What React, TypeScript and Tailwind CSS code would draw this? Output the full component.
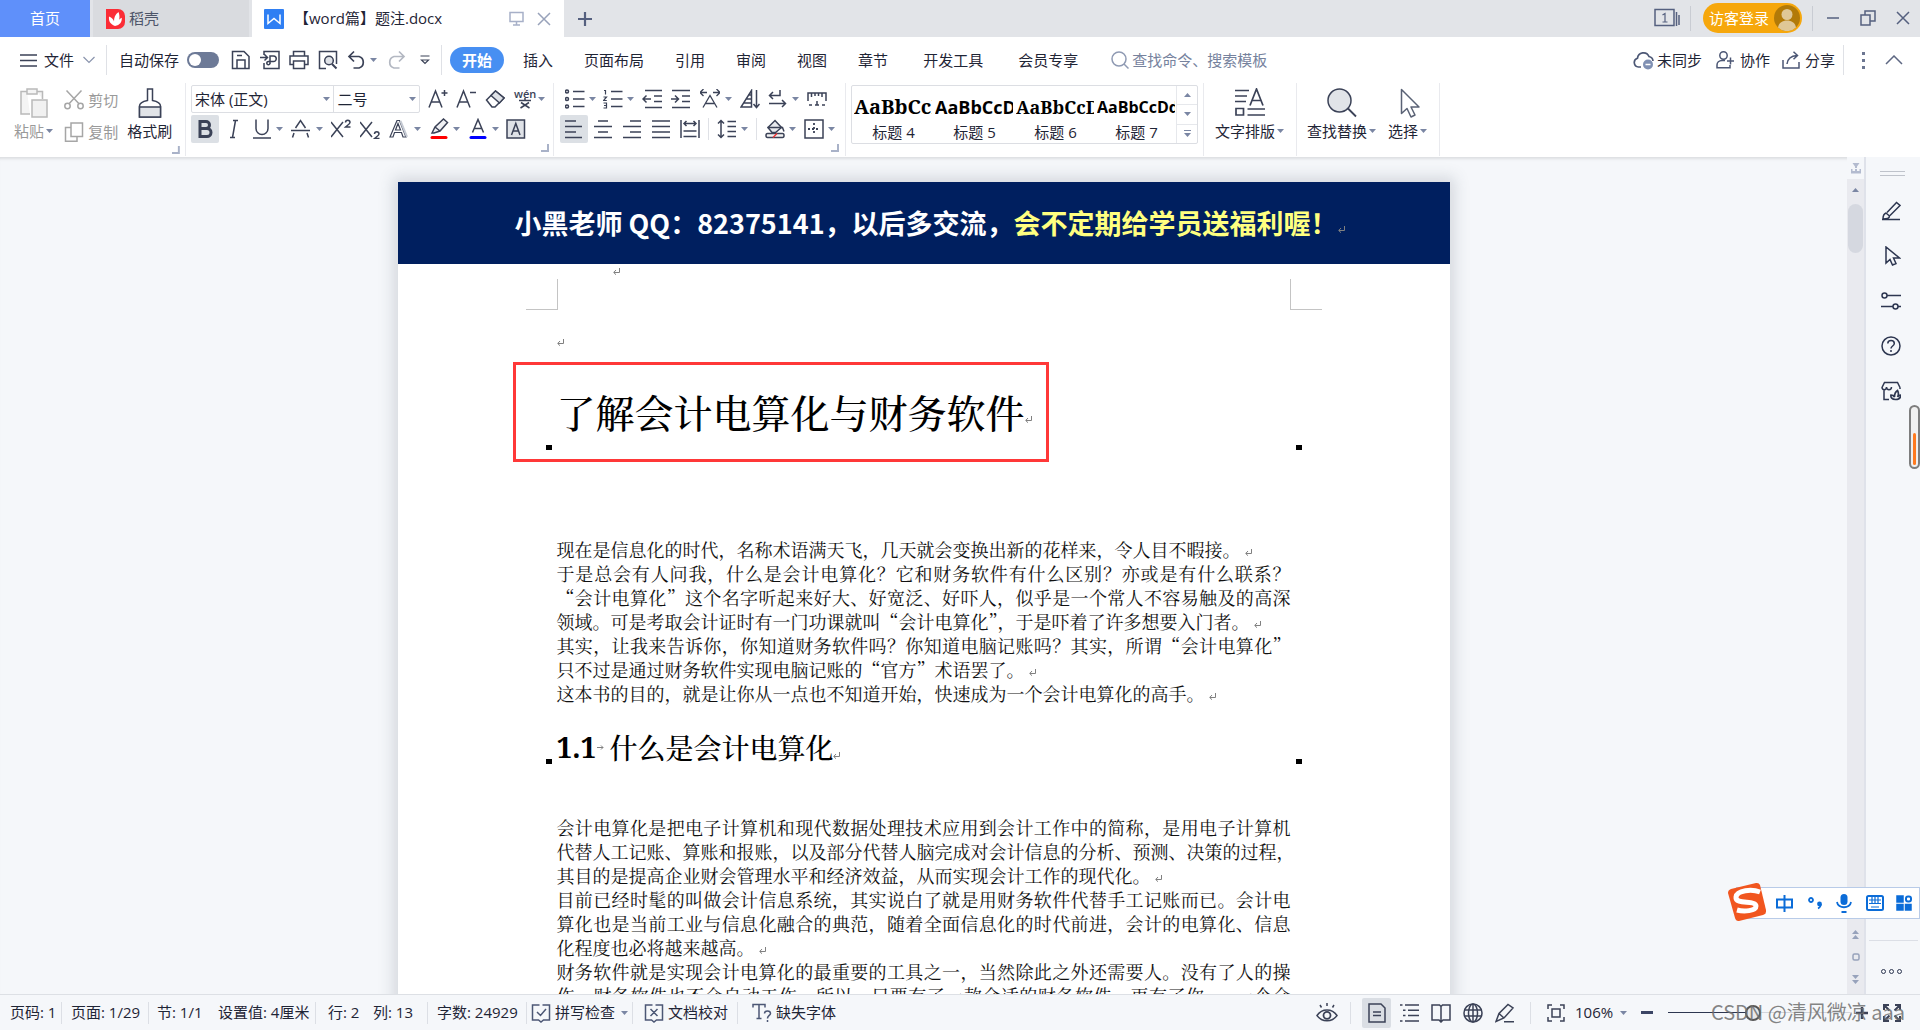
import React from 'react';

type P = { c?: string; children?: React.ReactNode };

/* ---------- shared pieces ---------- */

const Ico = ({ c = 'h-5 w-5', vb = '0 0 20 20', children }: P & { vb?: string }) => (
  <svg viewBox={vb} className={`shrink-0 ${c}`} fill="none" stroke="currentColor" strokeWidth="1.5" aria-hidden="true">
    {children}
  </svg>
);

const Caret = ({ c = '' }: P) => (
  <svg viewBox="0 0 7 4" className={`h-1 w-[7px] shrink-0 ${c}`} fill="#7a86a3" aria-hidden="true">
    <path d="M0 0h7L3.500 4z" />
  </svg>
);

const Tool = ({ label, c = '', children, caret }: P & { label: string; caret?: boolean }) => (
  <button type="button" aria-label={label} title={label} className={`flex h-7 shrink-0 items-center ${c}`}>
    {children}
    {caret && <Caret c="ml-auto" />}
  </button>
);

const Corner = ({ c = '' }: P) => (
  <svg viewBox="0 0 8 8" className={`h-2 w-2 ${c}`} fill="none" stroke="#a9b2c8" strokeWidth="2" aria-hidden="true">
    <path d="M7 0v7H0" />
  </svg>
);

const Mark = ({ c = 'inline-block' }: P) => (
  <svg viewBox="0 0 7 7" className={`h-[7px] w-[7px] shrink-0 ${c}`} fill="none" stroke="#808080" strokeWidth="1" aria-hidden="true">
    <path d="M6.500 0v4.500H1M3 2L.7 4.500L3 6.700" />
  </svg>
);

/* ---------- title bar ---------- */

function TitleBar() {
  return (
    <header className="flex h-[37px] items-stretch bg-[#e2e4e8]">
      <button type="button" className="w-[90px] bg-[#5f90fa] pb-px text-[15px] text-white">首页</button>
      <button type="button" className="ml-[3px] flex w-[156px] items-center bg-[#d9dbdf] pl-[13px] text-[15px] text-[#4d5569]">
        <svg viewBox="0 0 19 20" className="mr-1 h-5 w-[19px]" aria-hidden="true">
          <path d="M0 0h12a7 7 0 0 1 7 7v6a7 7 0 0 1-7 7H0z" fill="#fb2c36" />
          <path d="M9 17C4 15 2.500 12 3 7.500c3 1.200 4.500 3 5 5C8 8.500 9 5.500 12.500 3c1.800 5 1 8.500-1.300 11 .8-2.300 2-4.300 4.600-5.300C16 13 14 16 9 17z" fill="#fff" />
        </svg>
        稻壳
      </button>
      <div className="ml-[3px] flex w-[312px] items-center bg-white pl-3 text-[#1f2536]">
        <svg viewBox="0 0 20 20" className="h-5 w-5" aria-hidden="true">
          <rect width="20" height="20" rx="1" fill="#2f7ff3" />
          <path d="M4 5.500v9l6-5 6 5v-9" fill="none" stroke="#fff" strokeWidth="1.500" />
        </svg>
        <span className="ml-2.5 text-[15px] whitespace-nowrap">【word篇】题注.docx</span>
        <Ico c="mr-[13px] ml-auto h-[15px] w-[15px] text-[#a7b0c8]" vb="0 0 15 15">
          <path d="M1 1.500h13v9H1zM7.500 10.500V14M4 14h7" />
        </Ico>
        <button type="button" aria-label="关闭标签" className="mr-[13px] text-[#98a2ba]">
          <Ico c="h-3.5 w-3.5" vb="0 0 14 14"><path d="M1 1l12 12M13 1L1 13" /></Ico>
        </button>
      </div>
      <button type="button" aria-label="新建标签" className="ml-3.5 text-[#55607f]">
        <Ico c="h-3.5 w-3.5" vb="0 0 14 14"><path d="M7 0v14M0 7h14" strokeWidth="2.200" /></Ico>
      </button>
      <div className="ml-auto flex items-center pb-px text-[#55607f]">
        <button type="button" aria-label="窗口列表">
          <Ico c="h-5 w-[26px]" vb="0 0 26 20">
            <path d="M1 1.500h19v16H1zM22.500 4v14M25 7v10" />
            <path d="M8.500 7L11 5.500V14M8.500 14h5" strokeWidth="1.200" />
          </Ico>
        </button>
        <span className="ml-2.5 h-[25px] w-px bg-[#c9ccd3]" />
        <button type="button" className="ml-3 flex h-[30px] w-[99px] items-center justify-between rounded-[15px] bg-[#f6a70c] pr-0.5 pl-1.5 text-[15px] text-white">
          访客登录
          <svg viewBox="0 0 26 26" className="h-[26px] w-[26px]" aria-hidden="true">
            <circle cx="13" cy="13" r="13" fill="#b27a08" />
            <circle cx="13" cy="9.500" r="5.500" fill="#dfc797" />
            <path d="M4 22.500c1-5 4.500-7 9-7s8 2 9 7A13 13 0 0 1 4 22.500z" fill="#dfc797" />
          </svg>
        </button>
        <span className="ml-2.5 h-[25px] w-px bg-[#c9ccd3]" />
        <button type="button" aria-label="最小化" className="ml-3.5">
          <Ico c="h-3 w-3" vb="0 0 12 12"><path d="M0 6h12" /></Ico>
        </button>
        <button type="button" aria-label="还原" className="ml-[21px]">
          <Ico c="h-4 w-4" vb="0 0 16 16"><path d="M1 5h9v10H1zM5 5V1h10v10h-5" /></Ico>
        </button>
        <button type="button" aria-label="关闭" className="mr-2.5 ml-5">
          <Ico c="h-3.5 w-3.5" vb="0 0 14 14"><path d="M1 1l12 12M13 1L1 13" /></Ico>
        </button>
      </div>
    </header>
  );
}

/* ---------- menu row ---------- */

const TABS: [string, string][] = [
  ['插入', 'ml-[19px]'],
  ['页面布局', 'ml-[31px]'],
  ['引用', 'ml-[31px]'],
  ['审阅', 'ml-[31px]'],
  ['视图', 'ml-[31px]'],
  ['章节', 'ml-[31px]'],
  ['开发工具', 'ml-[35px]'],
  ['会员专享', 'ml-[35px]'],
];

function MenuRow() {
  return (
    <nav className="flex h-[46px] items-center text-[15px] whitespace-nowrap text-[#1f2536]">
      <button type="button" className="ml-5 flex items-center">
        <Ico c="mr-[7px] h-[13px] w-[17px] text-[#3b4257]" vb="0 0 17 13"><path d="M0 1h17M0 6.500h17M0 12h17" /></Ico>
        文件
        <Ico c="ml-[9px] h-2 w-3 text-[#8a94ad]" vb="0 0 12 8"><path d="M.5 1L6 6.500L11.500 1" strokeWidth="1.200" /></Ico>
      </button>
      <span className="ml-[11px] h-[30px] w-px bg-[#dfe1e6]" />
      <label className="ml-3 flex items-center">
        自动保存
        <input type="checkbox" role="switch" className="peer sr-only" />
        <span className="ml-2 flex h-4 w-8 items-center rounded-full bg-[#6d7a97] px-0.5"><span className="h-3 w-3 rounded-full bg-white" /></span>
      </label>
      <div className="flex items-center text-[#3b4257]">
        <Tool label="保存" c="ml-3">
          <Ico><path d="M1.500 1.500h11.500l5 5V18.500h-16.500zM6 18V10h8v8M6 5.500h5" /></Ico>
        </Tool>
        <Tool label="输出为PDF" c="ml-[9px]">
          <Ico><path d="M4 5V1.500h15v17H4V13M0 7.500h7M4.500 4.500l3 3-3 3M10 14V6h3.500a2.500 2.500 0 0 1 0 5.500H8.500a1.600 1.600 0 1 0 1.500 1.600" /></Ico>
        </Tool>
        <Tool label="打印" c="ml-[9px]">
          <Ico><path d="M4.500 6V1.500h11V6M4.500 14.500H1V6h18v8.500h-3.500M4.500 11h11v7.500h-11z" /></Ico>
        </Tool>
        <Tool label="打印预览" c="ml-[9px]">
          <Ico><path d="M8 18.500H1.500v-17h17V14" /><circle cx="11" cy="10.500" r="4.300" fill="#dfe2e7" /><path d="M14 14l4.500 4.500" strokeWidth="2" /></Ico>
        </Tool>
        <Tool label="撤销" c="ml-[9px] w-[30px]" caret>
          <Ico><path d="M7 1.500L2 6.500l5 5M2.500 6.500H12a6 6 0 0 1 0 11.500H6.500" strokeWidth="1.700" /></Ico>
        </Tool>
        <Tool label="重做" c="ml-[9px] text-[#b3b8c2]">
          <Ico><path d="M13 1.500l5 5-5 5M17.500 6.500H8A6 6 0 0 0 8 18h5.500" strokeWidth="1.700" /></Ico>
        </Tool>
        <Tool label="自定义快速访问工具栏" c="ml-3.5">
          <Ico c="h-2.5 w-2.5" vb="0 0 10 10"><path d="M.5 1h9M1.500 5h7L5 8.500z" strokeWidth="1.200" /></Ico>
        </Tool>
      </div>
      <span className="ml-[11px] h-[30px] w-px bg-[#dfe1e6]" />
      <button type="button" className="ml-2 h-[26px] w-[54px] rounded-full bg-[#478ff2] font-bold text-white">开始</button>
      {TABS.map(([t, m]) => (
        <button key={t} type="button" className={m}>{t}</button>
      ))}
      <label className="ml-[33px] flex items-center text-[#76829d]">
        <Ico c="mr-[3px] h-[18px] w-[18px] text-[#8f9ab3]" vb="0 0 18 18"><circle cx="8" cy="8" r="7" /><path d="M13 13l4.500 4.500" /></Ico>
        <input type="text" aria-label="搜索" placeholder="查找命令、搜索模板" className="w-40 bg-transparent outline-none placeholder:text-[#76829d]" />
      </label>
      <button type="button" className="ml-auto flex items-center gap-[3px]">
        <Ico c="h-5 w-[21px] text-[#4c5775]" vb="0 0 21 20">
          <path d="M8 17H5.500a4.500 4.500 0 0 1-1-8.800A6 6 0 0 1 16 6.500a5 5 0 0 1 4 4.500" strokeWidth="1.700" />
          <circle cx="15" cy="14.500" r="5" fill="#8090b3" stroke="none" /><path d="M12.500 14.500h5" stroke="#fff" />
        </Ico>
        未同步
      </button>
      <button type="button" className="ml-3.5 flex items-center gap-1.5">
        <Ico c="h-[18px] w-[18px] text-[#4c5775]" vb="0 0 18 18"><circle cx="7.500" cy="4.500" r="3.700" /><path d="M9 9.500H6C3 9.500 1 11.500 1 14v2.800h13V14M14.500 6.500v7M11 10h7" /></Ico>
        协作
      </button>
      <button type="button" className="ml-3 flex items-center gap-1">
        <Ico c="h-[18px] w-[19px] text-[#4c5775]" vb="0 0 19 18"><path d="M1 9v8h16v-6M5 13c.5-5 3-8 10-8.500M11.500.8l4 3.700-4 3.700" /></Ico>
        分享
      </button>
      <span className="ml-2 h-[30px] w-px bg-[#dfe1e6]" />
      <button type="button" aria-label="更多" className="ml-[18px] flex flex-col gap-1">
        <i className="h-[3px] w-[3px] bg-[#6c7691]" /><i className="h-[3px] w-[3px] bg-[#6c7691]" /><i className="h-[3px] w-[3px] bg-[#6c7691]" />
      </button>
      <button type="button" aria-label="收起功能区" className="mr-[17px] ml-5">
        <Ico c="h-2.5 w-[18px] text-[#5d6782]" vb="0 0 18 10"><path d="M1 9l8-8 8 8" /></Ico>
      </button>
    </nav>
  );
}

/* ---------- ribbon ---------- */

const GroupSep = ({ c = '' }: P) => <span className={`h-[73px] w-px shrink-0 bg-[#e9eaee] ${c}`} />;

function Clipboard() {
  return (
    <div className="flex w-[185px] text-[15px] whitespace-nowrap">
      <button type="button" className="ml-3.5 flex w-10 flex-col items-start pt-[5px] text-[#9a9a9a]">
        <Ico c="ml-1.5 h-[30px] w-7 text-[#b9b9b9]" vb="0 0 28 30">
          <path d="M10 26H1V3.500h6M17 3.500h5.500V11M7 1h10v5H7z" fill="#f4f4f4" /><path d="M12 12h15v17H12z" fill="#f1f1f1" />
        </Ico>
        <span className="mt-0.5 flex items-center gap-0.5 leading-[22px]">粘贴<Caret /></span>
      </button>
      <div className="ml-[11px] flex flex-col text-[#9a9a9a]">
        <button type="button" className="mt-[3px] flex h-7 items-center gap-1">
          <Ico c="h-5 w-5 text-[#a6a6a6]"><circle cx="3.500" cy="16" r="2.700" /><circle cx="16.500" cy="16" r="2.700" /><path d="M2.500.5L15 13.800M17.500.5L5 13.800" /></Ico>
          剪切
        </button>
        <button type="button" className="mt-1 flex h-7 items-center gap-1">
          <Ico c="h-5 w-5 text-[#a6a6a6]"><path d="M7 1h11.500v13.500H7z" /><path d="M7 5.500H1.500v13.800H13v-4.800" /></Ico>
          复制
        </button>
      </div>
      <button type="button" className="ml-[9px] flex flex-col items-center pt-[5px] text-[#1f2536]">
        <Ico c="h-[30px] w-6 text-[#3b4257]" vb="0 0 24 30"><path d="M9.500 1h5v11.500c5 1 8 2.500 8 5.500v11h-21V18c0-3 3-4.500 8-5.500z" /><path d="M1.500 19h21v10h-21z" fill="#e1e4e8" /></Ico>
        <span className="mt-0.5 leading-[22px]">格式刷</span>
      </button>
      <Corner c="mt-[63px] ml-auto mr-[5px]" />
    </div>
  );
}

function Combo({ label, value, c }: { label: string; value: string; c: string }) {
  return (
    <label className={`flex items-center ${c}`}>
      <select aria-label={label} defaultValue={value} className="h-full w-full min-w-0 appearance-none bg-transparent pl-[3px] text-[15px] text-[#1f2536] outline-none">
        <option>{value}</option>
      </select>
      <Caret c="mr-[3px]" />
    </label>
  );
}

function FontGroup() {
  return (
    <div className="flex w-[367px] flex-col pl-[5px] text-[#3b4257]">
      <div className="mt-0.5 flex items-center">
        <div className="flex h-7 w-[229px] rounded-[2px] border border-[#dcdee3]">
          <Combo label="字体" value="宋体 (正文)" c="w-[143px] border-r border-[#dcdee3]" />
          <Combo label="字号" value="二号" c="w-[85px]" />
        </div>
        <Tool label="增大字号" c="ml-2">
          <Ico><path d="M1 18.500L7.500 2l6.500 16.500M3.500 13h8M13.500 4h6M16.500 1v6" /></Ico>
        </Tool>
        <Tool label="减小字号" c="ml-2">
          <Ico><path d="M1 18.500L7.500 2l6.500 16.500M3.500 13h8M14 3.500h6" /></Ico>
        </Tool>
        <Tool label="清除格式" c="ml-[9px]">
          <Ico><path d="M1.500 11L10.500 2l8.500 7-9 9H7z" /><path d="M6 6.500L14.500 14l4.500-5-8.500-7z" fill="#dfe2e7" /></Ico>
        </Tool>
        <Tool label="拼音指南" c="ml-[9px] w-[31px]" caret>
          <span className="flex flex-col items-center text-[#3b4257]">
            <span className="font-['Open_Sans',sans-serif] text-[11px] leading-[9px] font-semibold">wén</span>
            <Ico c="h-[11px] w-3" vb="0 0 12 11"><path d="M6 0v2.500M0 2.500h12M2 4.500L10.500 10M10 4.500L1.500 10" /></Ico>
          </span>
        </Tool>
      </div>
      <div className="mt-0.5 flex items-center">
        <Tool label="加粗" c="w-7 justify-center rounded-[2px] bg-[#dce0e5]">
          <Ico><path d="M5 2.500h6a3.500 3.500 0 0 1 0 7H5zM5 9.500h7a4 4 0 0 1 0 8H5z" strokeWidth="3" /></Ico>
        </Tool>
        <Tool label="倾斜" c="ml-[5px]">
          <Ico><path d="M9 1.500h5M6 18.500h5M11.500 1.500L8.500 18.500" /></Ico>
        </Tool>
        <Tool label="下划线" c="ml-2 w-[31px]" caret>
          <Ico><path d="M4 .5v9a6 6 0 0 0 12 0v-9M1 19h18" /></Ico>
        </Tool>
        <Tool label="删除线" c="ml-2 w-8" caret>
          <Ico><path d="M4.500 9L9.500 1.500 14.500 9M0 11.500h19M3 14L1.500 18.500M16 14l1.500 4.500" /></Ico>
        </Tool>
        <Tool label="上标" c="ml-2">
          <Ico><path d="M0 3l12 15M12 3L0 18M14.500 3.500c0-3 4.500-3 4.500 0 0 1.500-3 3-4.500 4.500h5" /></Ico>
        </Tool>
        <Tool label="下标" c="ml-[9px]">
          <Ico><path d="M0 3l12 15M12 3L0 18M14.500 15c0-3 4.500-3 4.500 0 0 1.500-3 3-4.500 4.500h5" /></Ico>
        </Tool>
        <Tool label="文字效果" c="ml-[9px] w-8" caret>
          <Ico><path d="M1 18L8 1.500h2.500L17 18h-3l-1.500-4.500h-7L4 18zM6.500 11h5L9 4.500z" strokeWidth="1.200" /><path d="M11.500 2l6.500 16" stroke="#c5cad3" strokeWidth="2" /></Ico>
        </Tool>
        <Tool label="突出显示" c="ml-2 w-[31px]" caret>
          <Ico c="h-[22px] w-5" vb="0 0 20 22"><path d="M3 15l3-6 8.500-8 4 3.500L11 13l-6 2zM6 9l5 4" fill="#f0f1f4" /><path d="M3 19.500h14" stroke="#f00" strokeWidth="3" strokeLinecap="round" /></Ico>
        </Tool>
        <Tool label="字体颜色" c="ml-2 w-[31px]" caret>
          <Ico c="h-[22px] w-5" vb="0 0 20 22"><path d="M4.500 14.500L10 1.500l5.500 13M6.500 10.500h7" /><path d="M3 19.500h14" stroke="#00f" strokeWidth="3" strokeLinecap="round" /></Ico>
        </Tool>
        <Tool label="字符底纹" c="ml-[7px]">
          <Ico><path d="M1 1h17.500v18H1z" fill="#dfe2e7" /><path d="M5.500 16L9.800 4.500 14 16M7 12h5.500" /></Ico>
        </Tool>
      </div>
      <Corner c="mt-px mr-1 ml-auto" />
    </div>
  );
}

function ParagraphGroup() {
  return (
    <div className="flex w-[291px] flex-col pl-1.5 text-[#3b4257]">
      <div className="mt-0.5 flex items-center pl-[5px]">
        <Tool label="项目符号" c="w-[31px]" caret>
          <Ico><circle cx="2" cy="2.500" r="1.500" /><circle cx="2" cy="10" r="1.500" /><circle cx="2" cy="17.500" r="1.500" /><path d="M8 2.500h11.500M8 10h11.500M8 17.500h11.500" /></Ico>
        </Tool>
        <Tool label="编号" c="ml-[7px] w-[31px]" caret>
          <Ico><path d="M1 1.500h1.500v4M.5 8h3l-3 3.500h3.300M.5 14h3v5h-3M1 16.500h2" strokeWidth="1.200" /><path d="M8 2.500h11.500M8 10h11.500M8 17.500h11.500" /></Ico>
        </Tool>
        <Tool label="减少缩进" c="ml-2">
          <Ico><path d="M3 1.500h17M12 7h8M12 12.500h8M3 18.500h17M1 10h8M4.500 6.500L1 10l3.500 3.500" /></Ico>
        </Tool>
        <Tool label="增加缩进" c="ml-[9px]">
          <Ico><path d="M1 1.500h18M11 7h8M11 12.500h8M1 18.500h18M0 10h7M4 6.500L7.500 10 4 13.500" /></Ico>
        </Tool>
        <Tool label="中文版式" c="ml-[9px] w-8" caret>
          <Ico><path d="M3 18.500L10 6.500l7 12M5.500 14.500h9M0 3.500h7M13 3.500h7M3.500 0L0 3.500 3.500 7M16.500 0L20 3.500 16.500 7" strokeWidth="1.300" /></Ico>
        </Tool>
        <Tool label="排序" c="ml-2">
          <Ico><path d="M1 18h10.500V1.500zM3.500 14h8M5.500 10h6M8 6h3.500" /><path d="M16.500 1v17.500M13.500 15l3 3.500 3-3.500" /></Ico>
        </Tool>
        <Tool label="显示段落标记" c="ml-2 w-[31px]" caret>
          <Ico><path d="M12 1v5.500H1.500M5 3L1.500 6.500 5 10M1 14.500h16.500M14 11l3.500 3.500L14 18" /></Ico>
        </Tool>
        <Tool label="标尺" c="ml-2">
          <Ico><path d="M1 12V4h18v8M4.500 4v4M8 4v3M11.500 4v3M15 4v4" /><path d="M2 16h3M8 16h4M10 12v4M15 16h3" /></Ico>
        </Tool>
      </div>
      <div className="mt-0.5 flex items-center">
        <Tool label="左对齐" c="w-7 justify-center rounded-[2px] bg-[#dce0e5]">
          <Ico><path d="M1 2h11M1 7.500h17M1 13h11M1 18.500h17" /></Ico>
        </Tool>
        <Tool label="居中对齐" c="ml-[5px]">
          <Ico><path d="M5 2h10M1 7.500h18M5 13h10M1 18.500h18" /></Ico>
        </Tool>
        <Tool label="右对齐" c="ml-[9px]">
          <Ico><path d="M8 2h11M1 7.500h18M8 13h11M1 18.500h18" /></Ico>
        </Tool>
        <Tool label="两端对齐" c="ml-[9px]">
          <Ico><path d="M1 2h18M1 7.500h18M1 13h18M1 18.500h18" /></Ico>
        </Tool>
        <Tool label="分散对齐" c="ml-[9px]">
          <Ico><path d="M1 1v18M19 1v18M4 4.500h12M6.500 2L4 4.500 6.500 7M13.500 2L16 4.500 13.500 7M3.500 12h13M3.500 17.500h13" /></Ico>
        </Tool>
        <span className="ml-2 h-[22px] w-px bg-[#dfe1e6]" />
        <Tool label="行距" c="ml-2 w-[31px]" caret>
          <Ico><path d="M4 1.500v17M1 4.500l3-3 3 3M1 15.500l3 3 3-3M10.500 2.500H19M10.500 7.500H19M10.500 12.500H19M10.500 17.500H19" /></Ico>
        </Tool>
        <span className="ml-2 h-[22px] w-px bg-[#dfe1e6]" />
        <Tool label="底纹颜色" c="ml-2 w-[31px]" caret>
          <Ico><path d="M3 8.500L10 1.500l6.500 7-6 5H7z" fill="#e8eaee" /><path d="M2.500 8.500h15l1.500 4" /><path d="M2.500 14.500h15c2 0 2 4 0 4h-15c-2 0-2-4 0-4z" fill="#f3f3f3" /><path d="M8 18.500l4-4" stroke="#e33" /></Ico>
        </Tool>
        <Tool label="边框" c="ml-2 w-[31px]" caret>
          <Ico><path d="M1 1h18v18H1z" /><path d="M10 4v12M4 10h12" strokeDasharray="2 2" strokeWidth="1.800" /></Ico>
        </Tool>
      </div>
      <Corner c="mt-px mr-1.5 ml-auto" />
    </div>
  );
}

const STYLES: [string, string][] = [
  ['标题 4', "font-['Noto_Serif','Liberation_Serif',serif] text-[20px]"],
  ['标题 5', "font-['Open_Sans',sans-serif] text-[18px]"],
  ['标题 6', "font-['Noto_Serif','Liberation_Serif',serif] text-[18px]"],
  ['标题 7', "font-['Open_Sans',sans-serif] text-[16px]"],
];

function StylesGroup() {
  return (
    <div className="flex w-[357px] items-start pt-0.5 pl-[5px]">
      <div className="flex h-[59px] w-[347px] rounded-[2px] border border-[#dcdee3]">
        {STYLES.map(([name, font]) => (
          <button key={name} type="button" className="w-[81px] overflow-hidden pl-0.5">
            <span className={`block h-[35px] w-[78px] overflow-hidden pt-1.5 text-left leading-[26px] font-bold whitespace-nowrap text-black ${font}`}>AaBbCcDd</span>
            <span className="block text-center text-[15px] leading-[18px] text-[#1f2536]">{name}</span>
          </button>
        ))}
        <div className="flex flex-1 flex-col divide-y divide-[#e6e8ec] border-l border-[#e6e8ec]">
          <button type="button" aria-label="上一行" className="flex flex-1 items-center justify-center"><Caret c="rotate-180" /></button>
          <button type="button" aria-label="下一行" className="flex flex-1 items-center justify-center"><Caret /></button>
          <button type="button" aria-label="展开样式" className="flex flex-1 flex-col items-center justify-center gap-0.5"><i className="h-px w-[7px] bg-[#7a86a3]" /><Caret /></button>
        </div>
      </div>
    </div>
  );
}

const Big = ({ label, c, children }: P & { label: string }) => (
  <button type="button" className={`flex flex-col items-center pt-[5px] text-[15px] whitespace-nowrap text-[#1f2536] ${c}`}>
    {children}
    <span className="mt-0.5 flex items-center gap-0.5 leading-[22px]">{label}<Caret /></span>
  </button>
);

function Ribbon() {
  return (
    <div className="flex h-[74px] shrink-0 bg-white">
      <Clipboard />
      <GroupSep />
      <FontGroup />
      <GroupSep />
      <ParagraphGroup />
      <GroupSep />
      <StylesGroup />
      <GroupSep />
      <Big label="文字排版" c="ml-[11px]">
        <Ico c="h-[30px] w-[30px] text-[#3b4257]" vb="0 0 30 30"><path d="M0 2.500h14M0 8h12M0 13.500h11M1 20.500h7.500V27H1zM12.500 21H30M12.500 27H30M15 17.500L21.500 1 28 17.500M17 12.500h9" strokeWidth="1.700" /></Ico>
      </Big>
      <GroupSep c="ml-3" />
      <Big label="查找替换" c="ml-2.5">
        <Ico c="h-[30px] w-[30px] text-[#3b4257]" vb="0 0 30 30"><circle cx="12.500" cy="12.500" r="11.500" fill="#e1e4e8" /><path d="M21 20.500l8 8" strokeWidth="1.800" /></Ico>
      </Big>
      <Big label="选择" c="ml-3">
        <Ico c="ml-1 h-[30px] w-5 text-[#5a6275]" vb="0 0 20 30"><path d="M1.500 1.500v24l5.500-5 4 8.500 4-2-4-8h8z" strokeLinejoin="round" /></Ico>
      </Big>
      <GroupSep c="ml-3" />
    </div>
  );
}

/* ---------- document ---------- */

/* full: the line runs on to the next one and is set to the column's width */
type Line = { t: string; full?: boolean; mark?: boolean };

const PART1: Line[] = [
  { t: '现在是信息化的时代，名称术语满天飞，几天就会变换出新的花样来，令人目不暇接。', mark: true },
  { t: '于是总会有人问我，什么是会计电算化？它和财务软件有什么区别？亦或是有什么联系？', full: true },
  { t: '“会计电算化”这个名字听起来好大、好宽泛、好吓人，似乎是一个常人不容易触及的高深', full: true },
  { t: '领域。可是考取会计证时有一门功课就叫“会计电算化”，于是吓着了许多想要入门者。', mark: true },
  { t: '其实，让我来告诉你，你知道财务软件吗？你知道电脑记账吗？其实，所谓“会计电算化”', full: true },
  { t: '只不过是通过财务软件实现电脑记账的“官方”术语罢了。', mark: true },
  { t: '这本书的目的，就是让你从一点也不知道开始，快速成为一个会计电算化的高手。', mark: true },
];

const PART2: Line[] = [
  { t: '会计电算化是把电子计算机和现代数据处理技术应用到会计工作中的简称，是用电子计算机', full: true },
  { t: '代替人工记账、算账和报账，以及部分代替人脑完成对会计信息的分析、预测、决策的过程，' },
  { t: '其目的是提高企业财会管理水平和经济效益，从而实现会计工作的现代化。', mark: true },
  { t: '目前已经时髦的叫做会计信息系统，其实说白了就是用财务软件代替手工记账而已。会计电', full: true },
  { t: '算化也是当前工业与信息化融合的典范，随着全面信息化的时代前进，会计的电算化、信息', full: true },
  { t: '化程度也必将越来越高。', mark: true },
  { t: '财务软件就是实现会计电算化的最重要的工具之一，当然除此之外还需要人。没有了人的操', full: true },
  { t: '作，财务软件也不会自动工作，所以，只要有了一款合适的财务软件，再有了你——一个会', full: true },
];

const Lines = ({ items, c }: { items: Line[]; c: string }) => (
  <div className={`text-[18px] leading-6 text-[#111] ${c}`}>
    {items.map((l) => (
      <p key={l.t} className={l.full ? '[text-align-last:justify]' : 'whitespace-nowrap'}>
        {l.t}
        {l.mark && <Mark c="ml-1 inline-block" />}
      </p>
    ))}
  </div>
);

const HeadingDots = () => (
  <div className="-mx-[11px] flex justify-between">
    <i className="h-[5px] w-1.5 bg-black" />
    <i className="h-[5px] w-1.5 bg-black" />
  </div>
);

function Page() {
  return (
    <article className="w-[1052px] shrink-0 self-start bg-white font-['Noto_Serif_CJK_SC','Noto_Sans_CJK_SC',serif] text-black shadow-[0_0_14px_5px_rgba(60,70,90,0.17)]">
      <header className="flex h-[82px] items-center justify-center bg-[#001f5f] pl-3 font-['Noto_Sans_CJK_SC',sans-serif] text-[27px] font-bold whitespace-nowrap text-white">
        <span>小黑老师 QQ：82375141，以后多交流，<span className="text-[#ffff80]">会不定期给学员送福利喔！</span></span>
        <Mark c="mt-3" />
      </header>
      <Mark c="mt-1 ml-[215px] block" />
      <div className="flex justify-between px-32 pt-1">
        <i className="h-[31px] w-8 border-r border-b border-[#c4c4c4]" />
        <i className="h-[31px] w-8 border-b border-l border-[#c4c4c4]" />
      </div>
      <Mark c="mt-[29px] ml-[159px] block" />
      <div className="mt-4 ml-[115px] h-[100px] w-[536px] border-[3px] border-[#ff3838] pt-[22px] pl-[41px]">
        <h1 className="flex h-12 items-center text-[39px] leading-[48px] font-medium whitespace-nowrap">
          了解会计电算化与财务软件<Mark c="mt-4" />
        </h1>
      </div>
      <div className="-mt-[17px] ml-[159px] w-[734px]">
        <HeadingDots />
        <Lines items={PART1} c="mt-[87px]" />
        <h2 className="mt-[18px] flex h-12 items-center text-[28px] leading-[48px] font-medium whitespace-nowrap">
          <span className="font-['Noto_Serif','Liberation_Serif',serif] font-bold">1.1</span>
          <Ico c="mr-[5px] ml-px h-[7px] w-[7px] text-[#808080]" vb="0 0 7 7"><path d="M0 3.500h6M4 1.500l2 2-2 2" strokeWidth="1" /></Ico>
          <span>什么是会计电算化</span>
          <Mark c="mt-4" />
        </h2>
        <div className="-mt-3"><HeadingDots /></div>
        <Lines items={PART2} c="mt-[51px]" />
      </div>
    </article>
  );
}

/* ---------- right side ---------- */

function ScrollBar() {
  return (
    <div className="flex w-[19px] flex-col items-center border-r-2 border-[#dfe2ea] bg-[#e9eaef] text-[#97a2bb]">
      <button type="button" aria-label="标尺开关" className="flex h-[22px] w-full items-center justify-center bg-[#f5f7fa] text-[#b3bbcf]">
        <Ico c="h-[11px] w-2.5" vb="0 0 10 11"><path d="M1.500 0h7L6 3.500V5H4V3.500z" fill="currentColor" stroke="none" /><path d="M0 6h1.500v2h2.500V6h2v2h2.500V6H10v4.500H0z" fill="currentColor" stroke="none" /></Ico>
      </button>
      <Caret c="mt-[9px] rotate-180" />
      <div className="mt-3 h-[49px] w-[15px] rounded-full bg-[#d5d8e0]" />
      <div className="mt-auto mb-2.5 flex flex-col items-center gap-3.5">
        <button type="button" aria-label="上一页"><Ico c="h-[9px] w-[7px]" vb="0 0 7 9"><path d="M3.500 0L7 4H0zM3.500 5L7 9H0z" fill="currentColor" stroke="none" /></Ico></button>
        <button type="button" aria-label="选择浏览对象"><Ico c="h-2 w-2" vb="0 0 8 8"><rect x="1" y="1" width="6" height="6" rx="1.500" /></Ico></button>
        <button type="button" aria-label="下一页"><Ico c="h-[9px] w-[7px]" vb="0 0 7 9"><path d="M3.500 9L7 5H0zM3.500 4L7 0H0z" fill="currentColor" stroke="none" /></Ico></button>
      </div>
    </div>
  );
}

function SidePanel() {
  return (
    <aside className="flex w-[54px] flex-col items-center bg-[#f5f7fa] text-[#2d3650]">
      <div className="mt-3.5 mr-0.5 h-[5px] w-[25px] border-y border-[#bfc3cb]" />
      <div className="mt-[25px] mr-1 flex flex-col gap-[25px]">
        <button type="button" aria-label="样式"><Ico><path d="M1 18.500h18M2 18c0-3 .5-5 3-6l3.500 3c0 2-2 3-6.500 3zM6 11.500l9.500-10L19 4.500 9 14.500" /></Ico></button>
        <button type="button" aria-label="选择"><Ico><path d="M5 1v16l4-3.500 2.500 5.500 3.500-1.500-2.500-5.500h6z" /></Ico></button>
        <button type="button" aria-label="属性"><Ico><circle cx="3.500" cy="4.500" r="2.500" /><path d="M6 4.500h14M0 15.500h12M17 15.500h3" /><circle cx="14.500" cy="15.500" r="2.500" /></Ico></button>
        <button type="button" aria-label="帮助"><Ico><circle cx="10" cy="10" r="9" /><path d="M6.800 7.500c0-4 6.500-4 6.500 0 0 2.500-3.300 2.500-3.300 5M10 14v2" /></Ico></button>
        <button type="button" aria-label="稻壳商城"><Ico><path d="M3 8v10.500h5M1 6.500L3.500 1.500h13L19 6.500M1 6c0 3.500 4.500 3.500 4.500 0 0 3.500 5 3.500 5 0M19 6.500V8" /><path d="M14.500 18.500c-3.500 0-5-2-4.500-4.500 2 0 3 1 3.500 2 0-3 .5-5 3-6.500 1.500 3 1 5 0 6.500 1-1.500 2-2 3.300-2-.2 3-1.800 4.500-5.300 4.500z" strokeWidth="1.700" /></Ico></button>
      </div>
      <div className="mt-auto h-px w-[49px] bg-[#dcdfe6]" />
      <button type="button" aria-label="更多" className="mt-7 mr-1 mb-5 flex gap-[3px]">
        {[0, 1, 2].map((i) => <i key={i} className="h-[5px] w-[5px] rounded-full border-[1.5px] border-[#2d3650]" />)}
      </button>
    </aside>
  );
}

/* floating input-method bar */
function ImeBar() {
  return (
    <div className="absolute right-0 bottom-[111px] flex h-8 w-[184px] items-center border border-[#b8cbe8] bg-white pl-[39px] text-[#0b6cd8]">
      <svg viewBox="0 0 40 40" className="absolute -top-[6px] -left-2.5 h-10 w-10" aria-hidden="true">
        <path d="M4 7L29 1q3-.5 4 2l6 25q.5 4-3 5L12 39q-3 .5-4-3L1 11q0-3 3-4z" fill="#f1561f" />
        <path d="M33 10C25 7 10 8 9 15c-1 8 20 3 20 9 0 5-12 6-19 4" fill="none" stroke="#fff" strokeWidth="5" />
      </svg>
      <button type="button" aria-label="中英文切换"><Ico c="h-[17px] w-[17px]" vb="0 0 17 17"><path d="M1 4.500h15v8H1zM8.500 0v17" strokeWidth="2" /></Ico></button>
      <button type="button" aria-label="标点" className="ml-[15px]"><Ico c="h-4 w-3.5" vb="0 0 14 16"><circle cx="3" cy="5" r="2" strokeWidth="1.800" /><circle cx="11.500" cy="9" r="2.400" fill="currentColor" stroke="none" /><path d="M13 9c0 2.500-1 3.500-3 4.500" /></Ico></button>
      <button type="button" aria-label="语音输入" className="ml-3.5"><Ico c="h-[19px] w-4" vb="0 0 16 19"><rect x="4.500" width="7" height="11" rx="3.500" fill="currentColor" stroke="none" /><path d="M1 8c1 7 13 7 14 0M5.500 18h5" strokeWidth="1.800" /></Ico></button>
      <button type="button" aria-label="软键盘" className="ml-3.5"><Ico c="h-4 w-[18px]" vb="0 0 18 16"><rect x="1" y="1" width="16" height="14" rx="1.500" strokeWidth="2" /><path d="M3 5h12M3 8.500h12M6 2v7M9 2v7M12 2v7M5 12h8" strokeWidth="1.200" /></Ico></button>
      <button type="button" aria-label="工具箱" className="ml-3"><Ico c="h-4 w-4" vb="0 0 16 16"><path d="M1 1h6v6H1zM1 9.500h6V15H1zM9.500 9.500H15V15H9.500z" fill="currentColor" /><rect x="10" y="1.500" width="5" height="5" rx="2" strokeWidth="2" /></Ico></button>
    </div>
  );
}

/* ---------- status bar ---------- */

const Bar = ({ c = '' }: P) => <span className={`h-[22px] w-px shrink-0 bg-[#dcdfe5] ${c}`} />;

function StatusBar() {
  return (
    <footer className="relative flex h-9 shrink-0 items-center border-t border-[#dde0e5] bg-[#f5f7fa] text-[15px] whitespace-nowrap text-[#1f2536]">
      <span className="ml-2.5 w-[51px]">页码: 1</span><Bar />
      <span className="ml-[9px] w-[77px]">页面: 1/29</span><Bar />
      <span className="ml-2 w-[61px]">节: 1/1</span>
      <span className="w-[97px]">设置值: 4厘米</span><Bar />
      <span className="ml-3 w-[45px]">行: 2</span>
      <span className="w-[54px]">列: 13</span><Bar />
      <span className="ml-[9px] w-[89px]">字数: 24929</span><Bar />
      <button type="button" className="ml-1 flex w-[101px] items-center">
        <Ico c="mr-1 h-5 w-5 text-[#4c5775]"><path d="M8.500 2H1.500v15h6l2.500 2 2.500-2h6V2h-7M6 9l3.500 3.500L15 6" /></Ico>拼写检查<Caret c="mr-1 ml-auto" />
      </button><Bar />
      <button type="button" className="ml-[11px] flex w-[93px] items-center">
        <Ico c="mr-1 h-5 w-5 text-[#4c5775]"><path d="M8.500 2H1.500v15h6l2.500 2 2.500-2h6V2h-7M6.500 6l7 7M13.500 6l-7 7" /></Ico>文档校对
      </button><Bar />
      <button type="button" className="ml-3.5 flex items-center">
        <Ico c="mr-1 h-5 w-5 text-[#4c5775]"><path d="M1 4.500V1.500h12v3M7 1.500v14M4.500 15.500h5M12.500 10.500c0-3.500 6-3.500 6 0 0 2-3 2-3 5M15.500 17v2" /></Ico>缺失字体
      </button>

      <div className="ml-auto flex items-center text-[#3b4257]">
        <Tool label="护眼模式" c="mr-3"><Ico c="h-5 w-[22px]" vb="0 0 22 20"><path d="M1 12.500c5-7.500 15-7.500 20 0-5 7-15 7-20 0zM11 0v3M4 2l1.500 2.500M18 2l-1.500 2.500" /><circle cx="11" cy="12.300" r="3.500" strokeWidth="1.800" /></Ico></Tool>
        <Bar />
        <Tool label="页面视图" c="ml-[11px] h-[30px] w-[29px] justify-center rounded-[2px] bg-[#dadee4]"><Ico><path d="M2 1h12l4 4v14H2zM6 9h8M6 12.500h8" /></Ico></Tool>
        <Tool label="大纲" c="ml-[9px]"><Ico><path d="M0 2h2.500M5 2h14M3 7.300h2.500M8 7.300h11M3 12.600h2.500M8 12.600h11M0 18h2.500M5 18h14" /></Ico></Tool>
        <Tool label="阅读版式" c="ml-[11px]"><Ico><path d="M1 2h7.500l1.500 1.500L11.500 2H19v15h-7l-2 2-2-2H1zM10 3.500V18" /></Ico></Tool>
        <Tool label="Web版式" c="ml-3"><Ico><circle cx="10" cy="10" r="9" /><ellipse cx="10" cy="10" rx="4.500" ry="9" /><path d="M10 1v18M1.500 7h17M1.500 13h17" /></Ico></Tool>
        <Tool label="写作模式" c="ml-3"><Ico><path d="M1 18.500l3-8 9-9L18 5l-9 10zM4 10.500l5 4.500M9 18.800h10" /></Ico></Tool>
        <Bar c="ml-[15px]" />
        <Tool label="最佳显示比例" c="ml-4"><Ico c="h-[18px] w-[18px]" vb="0 0 18 18"><path d="M1 5V1h4M13 1h4v4M17 13v4h-4M5 17H1v-4M5 5h8v8H5z" /></Ico></Tool>
        <button type="button" className="ml-2.5 flex w-[52px] items-center justify-between text-[#1f2536]">106%<Caret /></button>
        <button type="button" aria-label="缩小" className="ml-3.5 h-[3px] w-3 bg-[#3b4565]" />
        <input
          type="range"
          aria-label="显示比例"
          min={0}
          max={100}
          defaultValue={46}
          className="ml-[15px] h-4 w-[184px] appearance-none bg-[linear-gradient(90deg,#2d3650_0_46%,#d3d6dc_46%)] bg-[length:100%_1px] bg-center bg-no-repeat [&::-webkit-slider-thumb]:h-4 [&::-webkit-slider-thumb]:w-4 [&::-webkit-slider-thumb]:appearance-none [&::-webkit-slider-thumb]:rounded-full [&::-webkit-slider-thumb]:border-2 [&::-webkit-slider-thumb]:border-[#555] [&::-webkit-slider-thumb]:bg-[#e8e8e8]"
        />
        <Tool label="放大" c="ml-1"><Ico c="h-3 w-3" vb="0 0 12 12"><path d="M6 0v12M0 6h12" strokeWidth="2.500" /></Ico></Tool>
        <Tool label="全屏" c="mr-[19px] ml-[15px]"><Ico c="h-[18px] w-[18px]" vb="0 0 18 18"><path d="M1 6V1h5M1 1l5.500 5.500M12 1h5v5M17 1l-5.500 5.500M17 12v5h-5M17 17l-5.500-5.500M6 17H1v-5M1 17l5.500-5.500" strokeWidth="2" /></Ico></Tool>
      </div>
      <span className="pointer-events-none absolute right-[15px] bottom-1 font-['Noto_Sans_CJK_SC',sans-serif] text-xl leading-7 text-[#6f6f6f]/85">CSDN @清风微凉 aaa</span>
    </footer>
  );
}

export default function App() {
  return (
    <div className="relative flex h-screen flex-col overflow-hidden bg-white font-['Open_Sans','Noto_Sans_CJK_SC',sans-serif]">
      <TitleBar />
      <MenuRow />
      <Ribbon />
      <main className="flex min-h-0 flex-1 bg-[#f5f7fa] shadow-[inset_0_4px_3px_-2px_rgba(0,0,0,0.1)]">
        <section className="flex min-w-0 flex-1 justify-center overflow-hidden pt-[25px]"><Page /></section>
        <ScrollBar />
        <SidePanel />
      </main>
      <StatusBar />
      <ImeBar />
      <div className="absolute top-[405px] right-0 flex h-16 w-[11px] items-end rounded-full border-2 border-[#7d7d7d] bg-[#f0f0f0] p-0.5">
        <div className="h-8 w-full rounded-full bg-[#ff7a1f]" />
      </div>
    </div>
  );
}
